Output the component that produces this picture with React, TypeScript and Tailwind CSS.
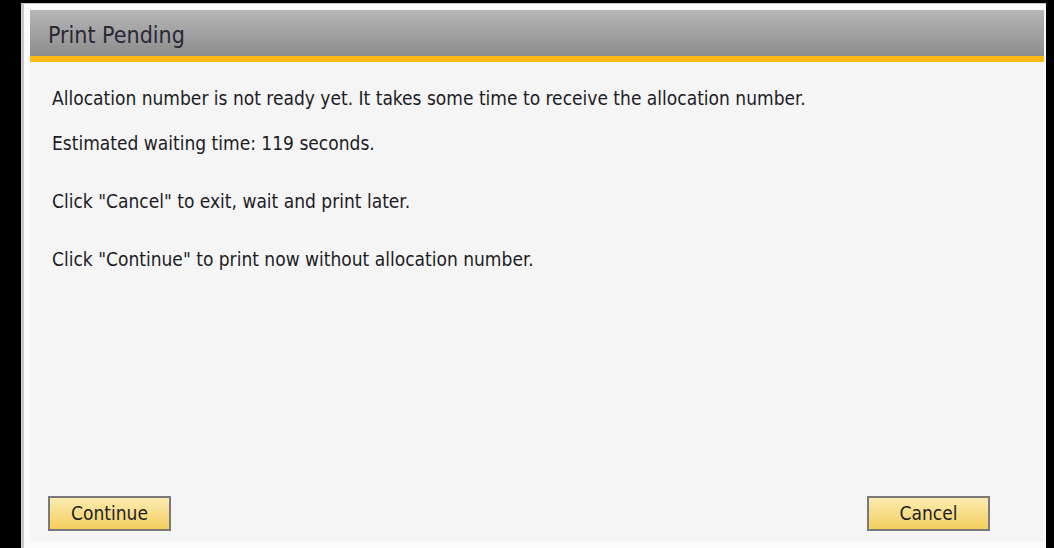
import React from "react";

const messages = [
  { text: "Allocation number is not ready yet. It takes some time to receive the allocation number.", gap: "mt-0" },
  { text: "Estimated waiting time: 119 seconds.", gap: "mt-[25px]" },
  { text: 'Click "Cancel" to exit, wait and print later.', gap: "mt-[38px]" },
  { text: 'Click "Continue" to print now without allocation number.', gap: "mt-[38px]" },
];

const DialogButton = ({ label }: { label: string }) => (
  <button className="h-[35px] w-[123px] border-2 border-[#7a7a7a] bg-gradient-to-b from-[#fbebb0] to-[#f4cf5c] text-[19px] text-[#1e1e28]">
    {label}
  </button>
);

const App = () => {
  return (
    <div
      className="h-[548px] w-[1054px] overflow-hidden bg-black pl-[21px] pt-[3px]"
      style={{ fontFamily: '"DejaVu Sans Condensed", "DejaVu Sans", sans-serif' }}
    >
      <div className="flex h-[548px] w-[1025px] flex-col border-l-[3px] border-t border-[#c9c9c9] bg-[#fbfbfb] pl-[6px] pr-[2px] pt-[6px]">
        <div className="flex h-[46px] items-center bg-gradient-to-b from-[#b6b6b6] to-[#8d8d8d] pl-[18px] pt-[4px] text-[23px] text-[#2b2838]">
          Print Pending
        </div>
        <div className="h-[6px] bg-[#fdb913]" />
        <div className="flex h-[480px] flex-col bg-[#f5f5f5] pl-[22px] pr-[22px] pt-[26px] text-[19px] text-[#1c1c26]">
          {messages.map((m, i) => (
            <p key={i} className={`${m.gap} leading-[20px]`}>
              {m.text}
            </p>
          ))}
          <div className="mt-auto mb-[11px] flex justify-between">
            <div className="-ml-[4px]">
              <DialogButton label="Continue" />
            </div>
            <div className="mr-[32px]">
              <DialogButton label="Cancel" />
            </div>
          </div>
        </div>
      </div>
    </div>
  );
};

export default App;
